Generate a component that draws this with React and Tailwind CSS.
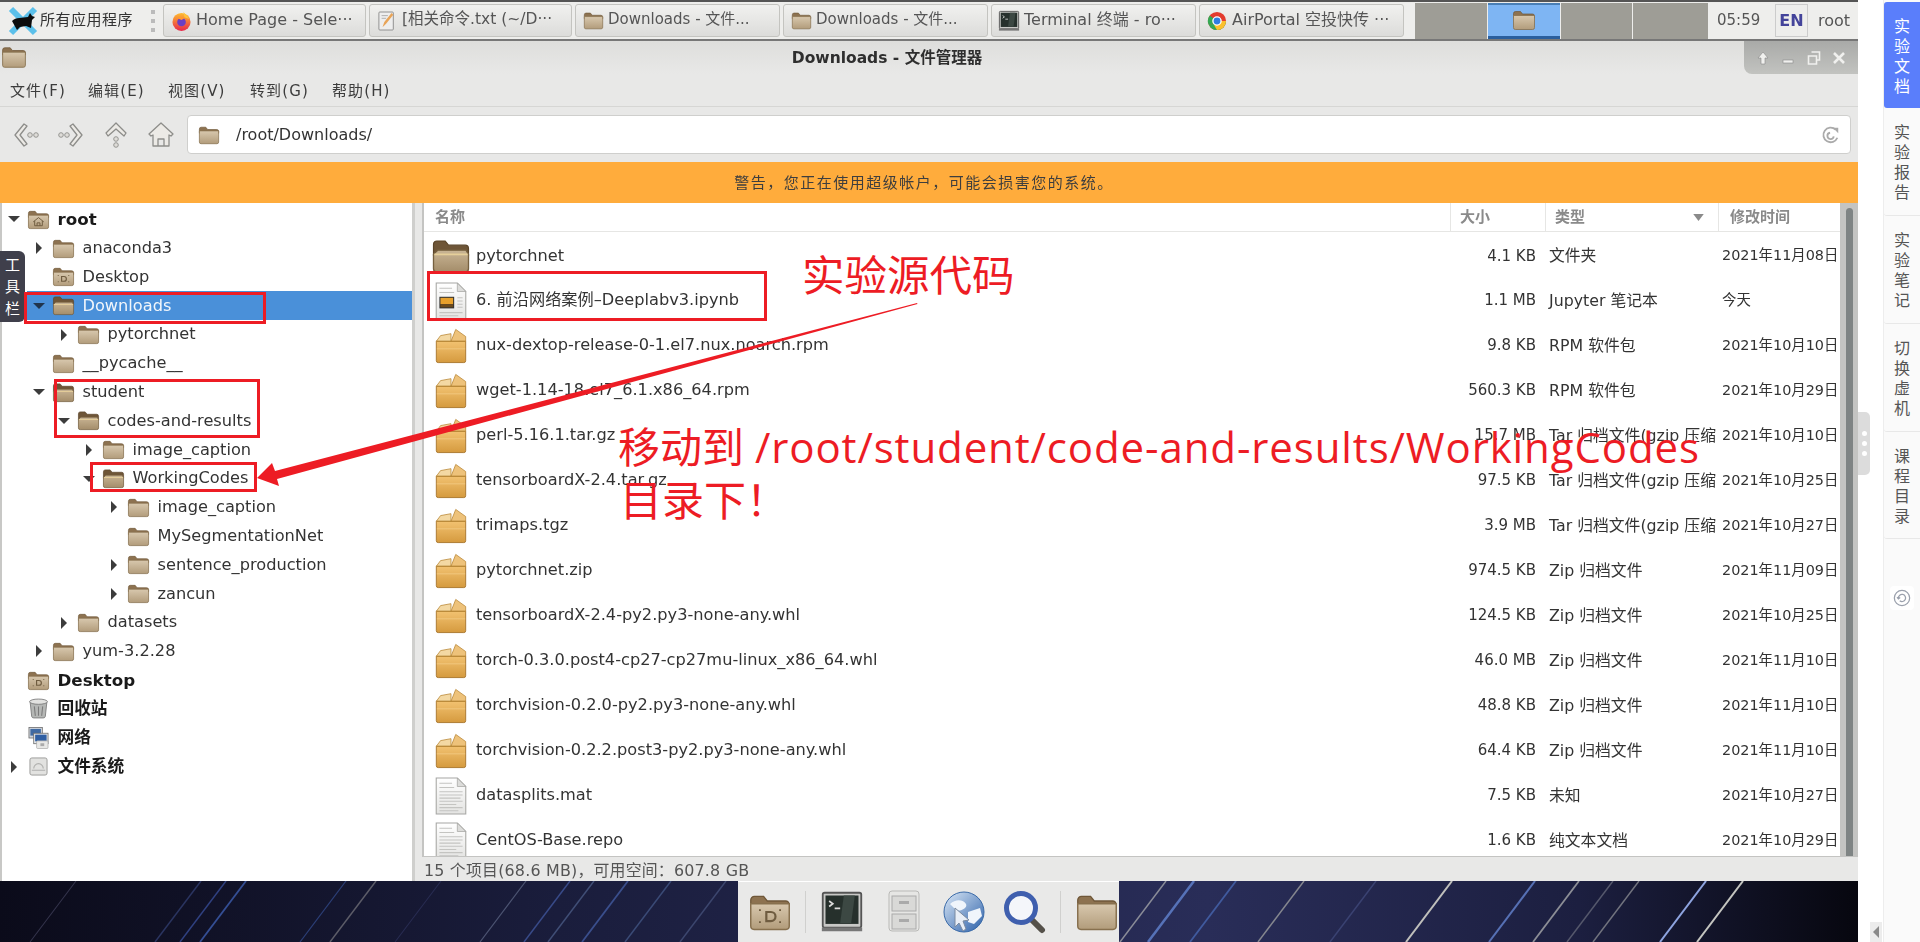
import React from "react";

const Defs = () => (
  <svg className="absolute w-0 h-0" aria-hidden="true">
    <defs>
      <linearGradient id="fb" x1="0" y1="0" x2="0" y2="1"><stop offset="0" stopColor="#d8c8ae" /><stop offset="1" stopColor="#b29c7b" /></linearGradient>
      <linearGradient id="fo" x1="0" y1="0" x2="0" y2="1"><stop offset="0" stopColor="#c9b595" /><stop offset="1" stopColor="#a48d6a" /></linearGradient>
      <linearGradient id="pk" x1="0" y1="0" x2="0" y2="1"><stop offset="0" stopColor="#f2c271" /><stop offset="1" stopColor="#d59a3e" /></linearGradient>
      <linearGradient id="dc" x1="0" y1="0" x2="0" y2="1"><stop offset="0" stopColor="#ffffff" /><stop offset="1" stopColor="#e4e4e2" /></linearGradient>
      <linearGradient id="glb" x1="0" y1="0" x2="1" y2="1"><stop offset="0" stopColor="#dce9f7" /><stop offset="1" stopColor="#2a5fa8" /></linearGradient>
      <linearGradient id="ff" x1="0" y1="0" x2="0" y2="1"><stop offset="0" stopColor="#ffbd2e" /><stop offset="1" stopColor="#e8274b" /></linearGradient>
    </defs>
  </svg>
);

const Folder = ({ className = "w-[23px] h-[23px]" }) => (
  <svg viewBox="0 0 24 24" className={className}>
    <path d="M1.500 5.500a2 2 0 0 1 2-2h5l2 2.500h10a2 2 0 0 1 2 2v2h-21z" fill="#8d7250" stroke="#6f5738" strokeWidth=".7" />
    <path d="M1.500 7.500h21v12.200a1.800 1.800 0 0 1-1.800 1.800H3.300a1.800 1.800 0 0 1-1.800-1.800z" fill="url(#fb)" stroke="#87704e" strokeWidth=".8" />
  </svg>
);
const FolderOpen = ({ className = "w-[23px] h-[23px]" }) => (
  <svg viewBox="0 0 24 24" className={className}>
    <path d="M1.500 5a2 2 0 0 1 2-2h5l2 2.500h10a2 2 0 0 1 2 2v4h-21z" fill="#6e5537" stroke="#5a4429" strokeWidth=".7" />
    <path d="M1.500 11 4 8.500h17l1.500 2.500v8.700a1.800 1.800 0 0 1-1.800 1.800H3.300a1.800 1.800 0 0 1-1.800-1.800z" fill="url(#fo)" stroke="#76603f" strokeWidth=".8" />
    <path d="M2 11h20" stroke="#e5cf9a" strokeWidth="1" />
  </svg>
);
const HomeFolder = ({ className = "w-[23px] h-[23px]" }) => (
  <svg viewBox="0 0 24 24" className={className}>
    <path d="M1.500 5.500a2 2 0 0 1 2-2h5l2 2.500h10a2 2 0 0 1 2 2v2h-21z" fill="#8d7250" stroke="#6f5738" strokeWidth=".7" />
    <path d="M1.500 7.500h21v12.200a1.800 1.800 0 0 1-1.800 1.800H3.300a1.800 1.800 0 0 1-1.800-1.800z" fill="url(#fb)" stroke="#87704e" strokeWidth=".8" />
    <path d="M6.500 14.500 12 10l5.500 4.500M8 13.500V18.500h8v-5M10.500 18.500v-3h3v3" fill="none" stroke="#6f5c40" strokeWidth="1" />
  </svg>
);
const DesktopFolder = ({ className = "w-[23px] h-[23px]" }) => (
  <svg viewBox="0 0 24 24" className={className}>
    <path d="M1.500 5.500a2 2 0 0 1 2-2h5l2 2.500h10a2 2 0 0 1 2 2v2h-21z" fill="#8d7250" stroke="#6f5738" strokeWidth=".7" />
    <path d="M1.500 7.500h21v12.200a1.800 1.800 0 0 1-1.800 1.800H3.300a1.800 1.800 0 0 1-1.800-1.800z" fill="url(#fb)" stroke="#87704e" strokeWidth=".8" />
    <path d="M10 12h2.500a2.500 2.500 0 0 1 0 5H10z" fill="none" stroke="#6f5c40" strokeWidth="1.200" />
    <path d="M6 11h1M17 11h1M6 17.500h1M17 17.500h1" stroke="#6f5c40" strokeWidth="1" />
  </svg>
);
const Package = ({ className = "w-9 h-9" }) => (
  <svg viewBox="0 0 34 38" className={className}>
    <path d="M1.500 14h31v20.500a2 2 0 0 1-2 2h-27a2 2 0 0 1-2-2z" fill="url(#pk)" stroke="#a9772d" strokeWidth="1" />
    <path d="M1.500 14 6 8l11-2v8z" fill="#f3d8a3" stroke="#b78634" strokeWidth=".8" />
    <path d="M17 14 22 1.500 32.500 9v5z" fill="#eec27a" stroke="#b78634" strokeWidth=".8" />
    <path d="M1.500 14h31" stroke="#b78634" strokeWidth=".8" />
    <path d="M2 22h30" stroke="#f5d08d" strokeWidth="1" opacity=".7" />
  </svg>
);
const Doc = ({ img, className = "w-8 h-[38px]" }) => (
  <svg viewBox="0 0 30 36" className={className}>
    <path d="M1 1h20l8 8v26H1z" fill="url(#dc)" stroke="#a6a6a3" strokeWidth="1" />
    <path d="M21 1v8h8z" fill="#dcdcda" stroke="#a6a6a3" strokeWidth=".7" />
    <path d="M4 6h12M4 10h14M4 29h22M4 32h18" stroke="#c4c4c1" strokeWidth="1" />
    {img ? (
      <>
        <rect x="4" y="14" width="14" height="11" fill="#333" />
        <rect x="5" y="15" width="12" height="6" fill="#e7a02c" />
        <rect x="5" y="21" width="12" height="3" fill="#6b4a1c" />
        <path d="M21 15h5M21 18h5M21 21h5M21 24h5" stroke="#c4c4c1" strokeWidth="1" />
      </>
    ) : (
      <path d="M4 14h22M4 17h22M4 20h20M4 23h22M4 26h16" stroke="#c4c4c1" strokeWidth="1" />
    )}
  </svg>
);
const Arrow = ({ dir, selected }) =>
  dir === "r" ? (
    <svg viewBox="0 0 8 12" className="w-2 h-3"><path d="M1 0v12l6-6z" fill="#3c3c3c" /></svg>
  ) : dir === "d" ? (
    <svg viewBox="0 0 12 8" className="w-3 h-2"><path d="M0 1h12L6 7z" fill={selected ? "#20344c" : "#3c3c3c"} /></svg>
  ) : null;

const Trash = () => (
  <svg viewBox="0 0 20 20" className="w-[21px] h-[21px]">
    <path d="M2 3.500h16l-1.500 14a2 2 0 0 1-2 1.500h-9a2 2 0 0 1-2-1.500z" fill="#b5b7b5" stroke="#777" strokeWidth=".8" />
    <ellipse cx="10" cy="3.500" rx="8.500" ry="2.500" fill="#e2e2e0" stroke="#777" strokeWidth=".8" />
    <path d="M6 8l1 9M10 8v9M14 8l-1 9" stroke="#7b7b7b" strokeWidth="1" />
  </svg>
);
const Network = () => (
  <svg viewBox="0 0 22 24" className="w-[21px] h-[24px]">
    <rect x="1" y="1" width="14" height="11" fill="#cfd5dc" stroke="#666" strokeWidth=".8" />
    <rect x="2.500" y="2.500" width="11" height="7" fill="#3f6aa3" />
    <rect x="6" y="7" width="15" height="11" fill="#e4e7ea" stroke="#666" strokeWidth=".8" />
    <rect x="7.500" y="8.500" width="12" height="7" fill="#2f5fa3" />
    <rect x="9" y="15" width="12" height="8" rx="1" fill="#e8e8e6" stroke="#999" strokeWidth=".6" />
    <rect x="13" y="17.500" width="4" height="3" fill="#aaa" />
  </svg>
);
const Disk = () => (
  <svg viewBox="0 0 20 20" className="w-[19px] h-[19px]">
    <rect x="1" y="1" width="18" height="18" rx="2" fill="#e2e2e0" stroke="#9a9a98" />
    <path d="M5 12a5 5 0 0 1 10 0M3 14h14" fill="none" stroke="#b0b0ae" strokeWidth="1.200" />
  </svg>
);

const pl = ["pl-[4px]", "pl-[29px]", "pl-[54px]", "pl-[79px]", "pl-[104px]", "pl-[129px]"];

const tree = [
  { n: "root", l: 0, a: "d", i: "home", b: 1 },
  { n: "anaconda3", l: 1, a: "r", i: "f" },
  { n: "Desktop", l: 1, i: "desk" },
  { n: "Downloads", l: 1, a: "d", i: "o", sel: 1 },
  { n: "pytorchnet", l: 2, a: "r", i: "f" },
  { n: "__pycache__", l: 1, i: "f" },
  { n: "student", l: 1, a: "d", i: "o" },
  { n: "codes-and-results", l: 2, a: "d", i: "o" },
  { n: "image_caption", l: 3, a: "r", i: "f" },
  { n: "WorkingCodes", l: 3, a: "d", i: "o" },
  { n: "image_caption", l: 4, a: "r", i: "f" },
  { n: "MySegmentationNet", l: 4, i: "f" },
  { n: "sentence_production", l: 4, a: "r", i: "f" },
  { n: "zancun", l: 4, a: "r", i: "f" },
  { n: "datasets", l: 2, a: "r", i: "f" },
  { n: "yum-3.2.28", l: 1, a: "r", i: "f" },
  { n: "Desktop", l: 0, i: "desk", b: 1 },
  { n: "回收站", l: 0, i: "trash", b: 1 },
  { n: "网络", l: 0, i: "net", b: 1 },
  { n: "文件系统", l: 0, a: "r", i: "disk", b: 1 },
];

const files = [
  ["pytorchnet", "4.1 KB", "文件夹", "2021年11月08日", "folder"],
  ["6. 前沿网络案例–Deeplabv3.ipynb", "1.1 MB", "Jupyter 笔记本", "今天", "nb"],
  ["nux-dextop-release-0-1.el7.nux.noarch.rpm", "9.8 KB", "RPM 软件包", "2021年10月10日", "pk"],
  ["wget-1.14-18.el7_6.1.x86_64.rpm", "560.3 KB", "RPM 软件包", "2021年10月29日", "pk"],
  ["perl-5.16.1.tar.gz", "15.7 MB", "Tar 归档文件(gzip 压缩", "2021年10月10日", "pk"],
  ["tensorboardX-2.4.tar.gz", "97.5 KB", "Tar 归档文件(gzip 压缩", "2021年10月25日", "pk"],
  ["trimaps.tgz", "3.9 MB", "Tar 归档文件(gzip 压缩", "2021年10月27日", "pk"],
  ["pytorchnet.zip", "974.5 KB", "Zip 归档文件", "2021年11月09日", "pk"],
  ["tensorboardX-2.4-py2.py3-none-any.whl", "124.5 KB", "Zip 归档文件", "2021年10月25日", "pk"],
  ["torch-0.3.0.post4-cp27-cp27mu-linux_x86_64.whl", "46.0 MB", "Zip 归档文件", "2021年11月10日", "pk"],
  ["torchvision-0.2.0-py2.py3-none-any.whl", "48.8 KB", "Zip 归档文件", "2021年11月10日", "pk"],
  ["torchvision-0.2.2.post3-py2.py3-none-any.whl", "64.4 KB", "Zip 归档文件", "2021年11月10日", "pk"],
  ["datasplits.mat", "7.5 KB", "未知", "2021年10月27日", "doc"],
  ["CentOS-Base.repo", "1.6 KB", "纯文本文档", "2021年10月29日", "doc"],
];

const TreeIcon = ({ i }) => {
  if (i === "home") return <HomeFolder />;
  if (i === "desk") return <DesktopFolder />;
  if (i === "o") return <FolderOpen />;
  if (i === "trash") return <Trash />;
  if (i === "net") return <Network />;
  if (i === "disk") return <Disk />;
  return <Folder />;
};

const Firefox = () => (
  <svg viewBox="0 0 22 22" className="w-[21px] h-[22px]">
    <circle cx="11" cy="12" r="9.500" fill="url(#ff)" />
    <path d="M13 1c1 3 5 4 6 8l-5-2z" fill="#ffc43a" />
    <circle cx="11" cy="12" r="4.500" fill="#6b3fc4" />
    <path d="M7 8a6 6 0 0 1 7 0l-3 2z" fill="#ff9a2e" />
  </svg>
);
const Chrome = () => (
  <svg viewBox="0 0 22 22" className="w-[20px] h-[24px]">
    <circle cx="11" cy="11" r="10" fill="#e33b2e" />
    <path d="M11 11 2.300 16A10 10 0 0 1 3 5z" fill="#34a853" />
    <path d="M2.300 16A10 10 0 0 0 11 21 10 10 0 0 0 21 11H11z" fill="#34a853" />
    <path d="M21 11A10 10 0 0 1 11 21l-3-5 3-5z" fill="#fbc02d" />
    <circle cx="11" cy="11" r="4.500" fill="#2f7de1" stroke="#fff" strokeWidth="1.500" />
  </svg>
);
const Term = ({ className }) => (
  <svg viewBox="0 0 24 24" className={className}>
    <rect x="1.500" y="1.500" width="21" height="19" rx="1" fill="#c8c8c6" stroke="#555" />
    <rect x="3" y="3" width="18" height="15.500" fill="#26302c" />
    <path d="M5 6l2 1.500-2 1.500M8 10h3" stroke="#ddd" strokeWidth=".9" fill="none" />
    <path d="M13 3l-2 15h6l2-15z" fill="#3c4843" />
    <rect x="1" y="20.500" width="22" height="2" fill="#777" />
  </svg>
);

const Tab = ({ icon, text, w, size = "text-[16px]" }) => (
  <div className={`${w} h-[33px] flex items-center gap-[3px] pl-[5px] rounded-[3px] border border-[#c4c4c0] bg-gradient-to-b from-[#f1f1ef] to-[#dcdcda] shrink-0 overflow-hidden`}>
    <span className="shrink-0 w-[24px] flex justify-center">{icon}</span>
    <span className={`${size} text-[#555] whitespace-nowrap pb-[2px]`}>{text}</span>
  </div>
);

const NavIcon = ({ d, dots }) => (
  <svg viewBox="0 0 30 30" className="w-[30px] h-[30px]">
    <path d={d} fill="#eceae6" stroke="#8d8d8a" strokeWidth="1.300" strokeLinejoin="round" />
    {dots.map(([x, y], i) => (
      <circle key={i} cx={x} cy={y} r="2.300" fill="#dedcd8" stroke="#8d8d8a" strokeWidth=".9" />
    ))}
  </svg>
);

const Wallpaper = () => {
  const lines = [
    [30, "#34344c", 1], [155, "#2a3460", 1.500], [180, "#2f4080", 1.500], [200, "#344e94", 1.800], [300, "#2b3e76", 1.200], [330, "#5c5c68", 1.500],
    [395, "#282c52", 1], [480, "#4c5472", 1.200], [524, "#384a88", 1.500], [548, "#404e76", 1.500], [582, "#3a4e8c", 1.800], [625, "#3a4a76", 1.500], [680, "#3c466e", 1.500],
    [1120, "#8a8c98", 1.500], [1148, "#5672b8", 2.500], [1190, "#405a9e", 1.800], [1258, "#85878f", 1.500], [1330, "#3a4272", 1.500],
    [1406, "#c0c0bc", 2], [1489, "#5670b4", 2], [1533, "#8c8e96", 1.800], [1567, "#55586c", 1.500], [1593, "#71737e", 1.500], [1660, "#8ea4e0", 2], [1697, "#c4c5c0", 2],
  ];
  return (
    <svg viewBox="0 0 1858 60" preserveAspectRatio="none" className="absolute inset-0 w-full h-full">
      {lines.map(([x, c, w], i) => (
        <line key={i} x1={x} y1="60" x2={x + 46} y2="0" stroke={c} strokeWidth={w} />
      ))}
    </svg>
  );
};

const SideTab = ({ chars, active, h }) => (
  <div className={`${h} w-full flex flex-col items-center pt-[15px] text-[16px] leading-[20px] rounded-l-[3px] ${active ? "bg-[#5a7efb] text-white" : "bg-[#fafafa] text-[#555] border-b border-[#e8e8e8]"}`}>
    {chars.split("").map((c, i) => (
      <span key={i}>{c}</span>
    ))}
  </div>
);

const Desk = () => (
  <div className="w-[1858px] h-[942px] shrink-0 flex flex-col bg-[#e8e8e7] blur-[0.5px]">
    <div className="h-[41px] shrink-0 border-t-2 border-b-2 border-t-[#555] border-b-[#777] bg-[#eeeeec] flex items-center">
      <svg viewBox="0 0 30 30" className="w-[30px] h-[30px] ml-[8px] shrink-0">
        <path d="M3 3l24 24M27 3L3 27" stroke="#5cc0ea" strokeWidth="6" />
        <path d="M4 15c4-4 10-3 16-4l2-4 2 3 3 1-3 3-1 8-5-2-6 1-3 3z" fill="#0c0c0c" />
      </svg>
      <span className="text-[15px] text-[#333] ml-[2px] w-[110px] tracking-[0.5px] shrink-0">所有应用程序</span>
      <div className="w-[4px] h-[22px] mr-[8px] ml-[1px] flex flex-col justify-between shrink-0">
        <span className="h-[4px] w-[4px] bg-[#bbb]" /><span className="h-[4px] w-[4px] bg-[#bbb]" /><span className="h-[4px] w-[4px] bg-[#bbb]" />
      </div>
      <div className="flex gap-[3px] shrink-0">
        <Tab w="w-[203px]" icon={<Firefox />} text="Home Page - Sele···" />
        <Tab w="w-[203px]" icon={<svg viewBox="0 0 20 24" className="w-[18px] h-[22px]"><rect x="1" y="2" width="16" height="20" rx="1" fill="#eee" stroke="#888" /><path d="M5 19l2-6L15 3l2 2-8 10z" fill="#e8a458" /><path d="M4 6h7M4 9h5" stroke="#aaa" /></svg>} text="[相关命令.txt (~/D···" size="text-[15.5px]" />
        <Tab w="w-[205px]" icon={<Folder className="w-[21px] h-[21px]" />} text="Downloads - 文件..." size="text-[15px]" />
        <Tab w="w-[205px]" icon={<Folder className="w-[21px] h-[21px]" />} text="Downloads - 文件..." size="text-[15px]" />
        <Tab w="w-[205px]" icon={<Term className="w-[22px] h-[22px]" />} text="Terminal 终端 - ro···" />
        <Tab w="w-[205px]" icon={<Chrome />} text="AirPortal 空投快传  ···" />
      </div>
      <div className="ml-[11px] flex gap-[1px] h-[36px] shrink-0">
        <div className="w-[72px] bg-[#9e9d96]" />
        <div className="w-[72px] bg-[#7eb5f3] border-t-2 border-b-[3px] border-t-[#4a7fb5] border-b-[#2a5f9e] flex items-center justify-center"><Folder className="w-[24px] h-[26px]" /></div>
        <div className="w-[71px] bg-[#9e9d96]" />
        <div className="w-[75px] bg-[#9e9d96]" />
      </div>
      <span className="ml-[9px] text-[15px] text-[#555] w-[58px] shrink-0">05:59</span>
      <span className="w-[33px] h-[33px] border border-[#ccc] flex items-center justify-center text-[16px] font-bold text-[#44449a] shrink-0">EN</span>
      <span className="ml-[10px] text-[16px] text-[#555] shrink-0">root</span>
    </div>

    <div className="h-[33px] shrink-0 relative flex items-center justify-center bg-gradient-to-b from-[#dededc] to-[#e8e8e7]">
      <span className="absolute left-[1px] top-[3px]"><Folder className="w-[26px] h-[26px]" /></span>
      <span className="text-[15.500px] font-bold text-[#2e2e2e] mr-[84px] pt-[2px]">Downloads - 文件管理器</span>
      <div className="absolute right-0 top-0 w-[114px] h-[33px] rounded-bl-[8px] bg-gradient-to-b from-[#a9aaa8] to-[#c2c3c0] flex items-center justify-around px-[6px] text-white">
        <svg viewBox="0 0 14 14" className="w-[14px] h-[14px]"><path d="M7 1l5 6H9v6H5V7H2z" fill="#f0f0ee" stroke="#888" strokeWidth=".6" /></svg>
        <svg viewBox="0 0 14 14" className="w-[14px] h-[14px]"><rect x="2" y="9" width="10" height="3" fill="#f0f0ee" stroke="#888" strokeWidth=".6" /></svg>
        <svg viewBox="0 0 14 14" className="w-[14px] h-[14px]"><path d="M4.500 1h8v8h-3M1.500 5h8v8h-8z" fill="none" stroke="#f0f0ee" strokeWidth="1.600" /></svg>
        <svg viewBox="0 0 14 14" className="w-[14px] h-[14px]"><path d="M2 2l10 10M12 2L2 12" stroke="#f0f0ee" strokeWidth="2.600" /></svg>
      </div>
    </div>

    <div className="h-[33px] shrink-0 flex items-center pl-[10px] pt-[2px] border-b border-[#d6d6d4] text-[15px] text-[#3c3c3c] gap-[20px] tracking-[1.100px]">
      <span className="w-[58px] whitespace-nowrap">文件(F)</span>
      <span className="w-[60px] whitespace-nowrap">编辑(E)</span>
      <span className="w-[62px] whitespace-nowrap">视图(V)</span>
      <span className="w-[62px] whitespace-nowrap">转到(G)</span>
      <span className="w-[62px] whitespace-nowrap">帮助(H)</span>
    </div>

    <div className="h-[55px] shrink-0 flex items-center pl-[11px] pr-[7px]">
      <div className="w-[176px] flex gap-[15px] shrink-0">
        <NavIcon d="M13 4 4 15l9 11 3-2-7-9 7-9z" dots={[[19, 15], [25, 15]]} />
        <NavIcon d="M17 4l9 11-9 11-3-2 7-9-7-9z" dots={[[5, 15], [11, 15]]} />
        <NavIcon d="M15 3 5 13l2 3 8-7 8 7 2-3z" dots={[[15, 19], [15, 25]]} />
        <NavIcon d="M15 3 3 14l2 2 2-1v11h16V15l2 1 2-2zM12 26v-7h6v7z" dots={[]} />
      </div>
      <div className="flex-1 h-[39px] bg-white rounded-[4px] border border-[#cfcfcd] flex items-center pl-[10px] pr-[9px]">
        <Folder className="w-[22px] h-[22px]" />
        <span className="ml-[16px] text-[16px] pt-[1px] text-[#333]">/root/Downloads/</span>
        <svg viewBox="0 0 22 22" className="ml-auto w-[20px] h-[22px]"><path d="M16 5a8 8 0 1 0 2 9M10 8.500a3.500 3.500 0 1 0 4 4" fill="none" stroke="#aaa" strokeWidth="2" /><path d="M13 3h6v6z" fill="#aaa" /></svg>
      </div>
    </div>

    <div className="h-[41px] shrink-0 bg-[#ffac3c] flex items-center justify-center text-[15px] text-[#3e3e3e] tracking-[1.500px] pt-[1px] pr-[10px]">
      警告，您正在使用超级帐户，可能会损害您的系统。
    </div>

    <div className="h-[678px] shrink-0 flex">
      <div className="w-[412px] shrink-0 bg-white border-l-2 border-l-[#c8c8c6] pt-[2px] overflow-hidden">
        {tree.map((t, i) => (
          <div key={i} className={`h-[28.800px] flex items-center ${t.sel ? "bg-[#4a90d9] text-[#f2f6fb] ml-[25px] pl-[4px]" : `${pl[t.l]} text-[#333]`}`}>
            <span className="w-[16px] h-[16px] flex items-center justify-center shrink-0 mr-[4px]"><Arrow dir={t.a} selected={t.sel} /></span>
            <span className="w-[24px] shrink-0 flex justify-center"><TreeIcon i={t.i} /></span>
            <span className={`ml-[7.500px] whitespace-nowrap ${t.b ? "text-[16.700px] font-bold text-[#1a1a1a]" : "text-[16.200px]"}`}>{t.n}</span>
          </div>
        ))}
      </div>
      <div className="w-[10px] shrink-0 border-l-[3px] border-[#cfcfcd] bg-[#e8e8e7]" />
      <div className="flex-1 flex flex-col min-w-0">
        <div className="h-[653px] shrink-0 flex">
          <div className="flex-1 min-w-0 border-l-2 border-[#c4c4c2] bg-white flex flex-col overflow-hidden">
            <div className="h-[29px] shrink-0 grid grid-cols-[1026px_95px_173px_122px] border-b border-[#e6e6e4] text-[15px] font-bold text-[#8a8a8a] items-center">
              <span className="pl-[11px]">名称</span>
              <span className="pl-[9px] border-l border-[#e6e6e4] h-full flex items-center">大小</span>
              <span className="pl-[9px] pr-[14px] border-l border-[#e6e6e4] h-full flex items-center justify-between">类型<svg viewBox="0 0 12 8" className="w-[11px] h-[7px]"><path d="M0 0h12L6 8z" fill="#8a8a8a" /></svg></span>
              <span className="pl-[11px] border-l border-[#e6e6e4] h-full flex items-center">修改时间</span>
            </div>
            {files.map((f, i) => (
              <div key={i} className="h-[45px] shrink-0 grid grid-cols-[1026px_95px_173px_122px] items-center text-[#333] pt-[2px]">
                <div className="flex items-center min-w-0">
                  <span className="w-[52px] shrink-0 flex justify-center pl-[2px]">
                    {f[4] === "folder" && <FolderOpen className="w-[40px] h-[44px]" />}
                    {f[4] === "nb" && <Doc img />}
                    {f[4] === "pk" && <Package />}
                    {f[4] === "doc" && <Doc />}
                  </span>
                  <span className="whitespace-nowrap text-[16.200px]">{f[0]}</span>
                </div>
                <span className="text-right pr-[9px] whitespace-nowrap text-[15px]">{f[1]}</span>
                <span className="pl-[4px] whitespace-nowrap overflow-hidden text-[15.800px]">{f[2]}</span>
                <span className="pl-[4px] whitespace-nowrap overflow-hidden text-[14.400px]">{f[3]}</span>
              </div>
            ))}
          </div>
          <div className="w-[18px] shrink-0 bg-[#c4c4c2] pl-[6px] pt-[5px]">
            <div className="w-[7px] h-full rounded-t-[4px] bg-[#7f8484]" />
          </div>
        </div>
        <div className="flex-1 border-t border-[#c4c4c2] flex items-center pl-[2px] pt-[2px] text-[15.900px] text-[#555] tracking-[0.2px]">
          15 个项目(68.6 MB)，可用空间：607.8 GB
        </div>
      </div>
    </div>

    <div className="flex-1 relative bg-[linear-gradient(90deg,#0b0b1a_0%,#1a1d3c_30%,#292d58_65%,#1c1f40_85%,#07070f_100%)] flex justify-center">
      <Wallpaper />
      <div className="relative ml-[-1px] w-[381px] h-full bg-[#e9e9e8] border-t border-white flex items-center pl-[10px]">
        <DesktopFolder className="w-[44px] h-[44px]" />
        <span className="w-px h-[42px] bg-[#d0d0ce] ml-[13px]" />
        <Term className="w-[44px] h-[44px] ml-[14px]" />
        <svg viewBox="0 0 34 44" className="w-[34px] h-[44px] ml-[23px]">
          <rect x="2" y="1" width="30" height="40" rx="3" fill="#e6e6e4" stroke="#b9b9b7" />
          <rect x="5" y="6" width="24" height="15" fill="#d9d9d7" stroke="#aaa" />
          <rect x="5" y="24" width="24" height="15" fill="#d9d9d7" stroke="#aaa" />
          <rect x="12" y="11" width="10" height="3" fill="#aaa" />
          <rect x="12" y="29" width="10" height="3" fill="#aaa" />
        </svg>
        <svg viewBox="0 0 44 44" className="w-[44px] h-[44px] ml-[21px]">
          <circle cx="22" cy="22" r="20" fill="url(#glb)" stroke="#3a6aa8" />
          <path d="M8 14c6-6 14-4 16 0s-6 8-10 6zM26 22l12-4 2 8-8 8-6-2z" fill="#f0f5fb" />
          <path d="M13 18l14 12-6 1 3 8-3 2-4-8-4 4z" fill="#e8eef6" stroke="#7a8aa0" />
        </svg>
        <svg viewBox="0 0 44 44" className="w-[44px] h-[44px] ml-[16px]">
          <path d="M28 28l12 12" stroke="#55514a" strokeWidth="6" strokeLinecap="round" />
          <circle cx="19" cy="18" r="14.500" fill="#f4f6fa" stroke="#3f5fae" strokeWidth="5" />
        </svg>
        <span className="w-px h-[42px] bg-[#d0d0ce] ml-[14px]" />
        <Folder className="w-[44px] h-[44px] ml-[14px]" />
      </div>
    </div>
  </div>
);

const Annotations = () => (
  <>
    <div className="absolute left-0 top-[251px] w-[25px] h-[71px] rounded-r-[6px] bg-[#3f3f4b] text-white text-[15px] leading-[22px] flex flex-col items-center justify-center">
      <span>工</span><span>具</span><span>栏</span>
    </div>
    <div className="absolute left-[24px] top-[292px] w-[242px] h-[32px] border-[3px] border-[#ed1c24]" />
    <div className="absolute left-[54px] top-[379px] w-[206px] h-[59px] border-[3px] border-[#ed1c24]" />
    <div className="absolute left-[90px] top-[462px] w-[167px] h-[30px] border-[3px] border-[#ed1c24]" />
    <div className="absolute left-[427px] top-[271px] w-[340px] h-[50px] border-[3px] border-[#ed1c24]" />
    <svg viewBox="0 0 1920 942" className="absolute inset-0 w-[1920px] h-[942px] pointer-events-none">
      <path d="M917 303 275 471 272 463 257 478 279 486 277 479 917.500 304z" fill="#ed1c24" />
    </svg>
    <div className="absolute left-[802px] top-[243px] text-[42.500px] leading-[60px] text-[#ed1c24] whitespace-nowrap [font-family:'Noto_Sans_CJK_SC',sans-serif]">实验源代码</div>
    <div className="absolute left-[618px] top-[417px] text-[42px] leading-[60px] text-[#ed1c24] whitespace-nowrap [font-family:'Open_Sans','Noto_Sans_CJK_SC',sans-serif]">移动到 <span className="tracking-[0.880px]">/root/student/code-and-results/WorkingCodes</span></div>
    <div className="absolute left-[620px] top-[470px] text-[42px] leading-[60px] text-[#ed1c24] whitespace-nowrap [font-family:'Open_Sans','Noto_Sans_CJK_SC',sans-serif]">目录下！</div>
  </>
);

export default function App() {
  return (
    <div className="relative w-[1920px] h-[942px] overflow-hidden bg-white flex [font-family:'DejaVu_Sans','Noto_Sans_CJK_SC',sans-serif]">
      <Defs />
      <Desk />
      <div className="flex-1 flex min-w-0">
        <div className="w-[25px] shrink-0 flex flex-col items-start">
          <div className="mt-[412px] w-[12px] h-[63px] rounded-r-[5px] bg-[#dcdcdc] flex flex-col items-center justify-center gap-[5px]">
            <span className="w-[5px] h-[5px] rounded-full bg-white" />
            <span className="w-[5px] h-[5px] rounded-full bg-white" />
            <span className="w-[5px] h-[5px] rounded-full bg-white" />
          </div>
          <div className="mt-auto ml-[12px] w-[12px] h-[20px] bg-[#ececec] flex items-center justify-center">
            <svg viewBox="0 0 6 12" className="w-[6px] h-[12px]"><path d="M6 0v12L0 6z" fill="#8a8a8a" /></svg>
          </div>
        </div>
        <div className="flex-1 flex flex-col bg-[#fafafa] border-l border-[#ededed] pt-[2px]">
          <SideTab chars="实验文档" active h="h-[106px]" />
          <SideTab chars="实验报告" h="h-[108px]" />
          <SideTab chars="实验笔记" h="h-[108px]" />
          <SideTab chars="切换虚机" h="h-[108px]" />
          <SideTab chars="课程目录" h="h-[107px]" />
          <div className="mt-[47px] mx-auto w-[24px] h-[24px] bg-white rounded-[4px] flex items-center justify-center">
            <svg viewBox="0 0 20 20" className="w-[18px] h-[18px]"><circle cx="10" cy="10" r="8.500" fill="none" stroke="#9aa0ac" strokeWidth="1.400" /><path d="M6 10a4 4 0 1 1 1.500 3.100M4.500 9l1.500 2 2-1.500" fill="none" stroke="#9aa0ac" strokeWidth="1.400" /></svg>
          </div>
        </div>
      </div>
      <Annotations />
    </div>
  );
}
